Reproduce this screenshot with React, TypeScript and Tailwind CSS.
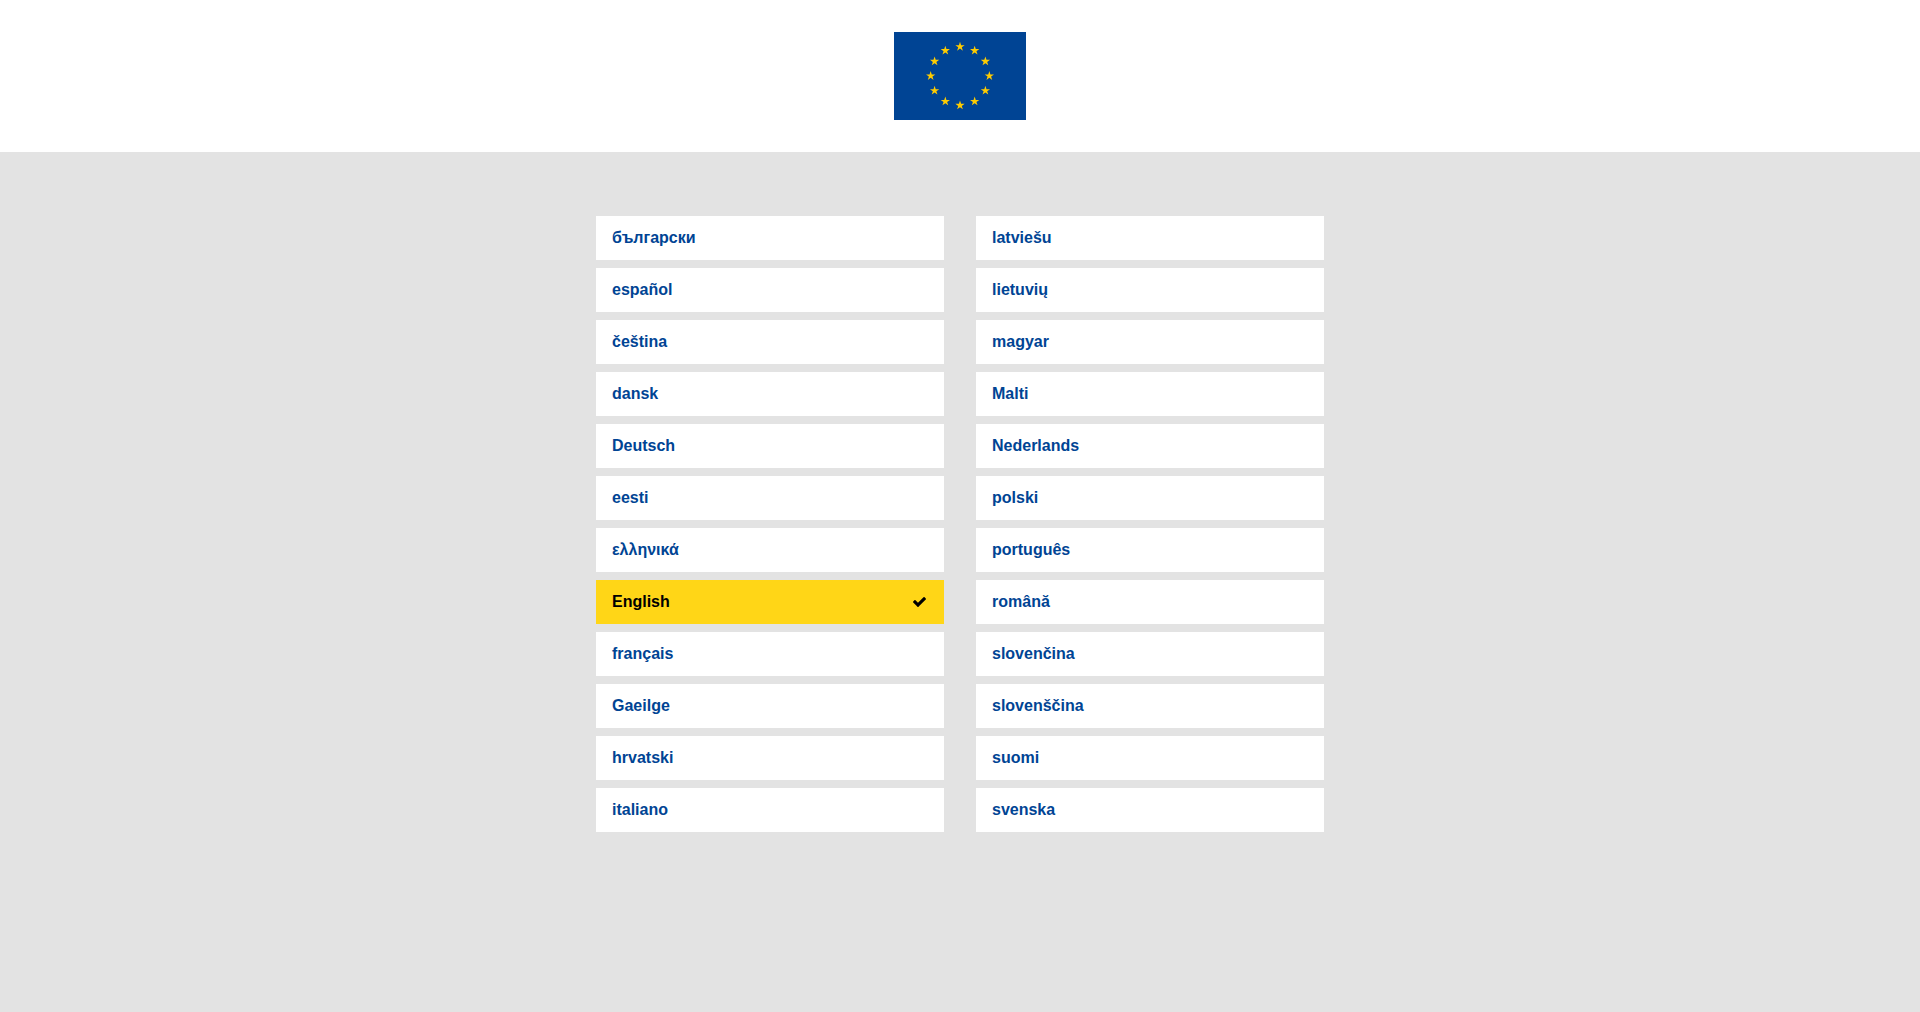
import React from 'react';

type Language = { code: string; name: string };

const columns: Language[][] = [
  [
    { code: 'bg', name: 'български' },
    { code: 'es', name: 'español' },
    { code: 'cs', name: 'čeština' },
    { code: 'da', name: 'dansk' },
    { code: 'de', name: 'Deutsch' },
    { code: 'et', name: 'eesti' },
    { code: 'el', name: 'ελληνικά' },
    { code: 'en', name: 'English' },
    { code: 'fr', name: 'français' },
    { code: 'ga', name: 'Gaeilge' },
    { code: 'hr', name: 'hrvatski' },
    { code: 'it', name: 'italiano' },
  ],
  [
    { code: 'lv', name: 'latviešu' },
    { code: 'lt', name: 'lietuvių' },
    { code: 'hu', name: 'magyar' },
    { code: 'mt', name: 'Malti' },
    { code: 'nl', name: 'Nederlands' },
    { code: 'pl', name: 'polski' },
    { code: 'pt', name: 'português' },
    { code: 'ro', name: 'română' },
    { code: 'sk', name: 'slovenčina' },
    { code: 'sl', name: 'slovenščina' },
    { code: 'fi', name: 'suomi' },
    { code: 'sv', name: 'svenska' },
  ],
];

const selected = 'en';

// Five-pointed star, one point up, as a list of polygon points.
function starPoints(cx: number, cy: number, outer: number): string {
  const inner = outer * 0.382;
  return Array.from({ length: 10 }, (_, i) => {
    const r = i % 2 === 0 ? outer : inner;
    const a = (i * Math.PI) / 5 - Math.PI / 2;
    return `${(cx + r * Math.cos(a)).toFixed(2)},${(cy + r * Math.sin(a)).toFixed(2)}`;
  }).join(' ');
}

function Flag() {
  return (
    <svg viewBox="0 0 132 88" className="h-[88px] w-[132px]" role="img" aria-label="European Union flag">
      <rect width="132" height="88" fill="#004494" />
      {Array.from({ length: 12 }, (_, i) => {
        const a = (i * Math.PI) / 6;
        return (
          <polygon
            key={i}
            fill="#ffcc00"
            points={starPoints(66 + 29.33 * Math.sin(a), 44 - 29.33 * Math.cos(a), 4.89)}
          />
        );
      })}
    </svg>
  );
}

function Check() {
  return (
    <svg viewBox="121 334 1550 1188" className="mr-0.5 h-2.5 w-[13px]" fill="currentColor" aria-hidden="true">
      <path d="M1671 566q0 40-28 68l-724 724-136 136q-28 28-68 28t-68-28l-136-136-362-362q-28-28-28-68t28-68l136-136q28-28 68-28t68 28l294 295 656-657q28-28 68-28t68 28l136 136q28 28 28 68z" />
    </svg>
  );
}

function LanguageLink({ language }: { language: Language }) {
  const active = language.code === selected;
  return (
    <li>
      <a
        href={`#${language.code}`}
        lang={language.code}
        aria-current={active ? 'true' : undefined}
        className={
          active
            ? 'flex items-center justify-between bg-[#ffd617] px-4 py-2.5 text-black'
            : 'flex items-center justify-between bg-white px-4 py-2.5 text-[#004494] hover:underline'
        }
      >
        {language.name}
        {active && <Check />}
      </a>
    </li>
  );
}

export default function App() {
  return (
    <div className="flex min-h-screen flex-col bg-[#e3e3e3] font-['Liberation_Sans',Arial,sans-serif] text-base font-bold">
      <header className="flex justify-center bg-white py-8">
        <Flag />
      </header>
      <main className="mx-auto grid w-full max-w-[760px] grid-cols-1 gap-x-8 gap-y-2 px-4 py-16 sm:grid-cols-2">
        {columns.map((column, i) => (
          <ul key={i} className="flex flex-col gap-2">
            {column.map((language) => (
              <LanguageLink key={language.code} language={language} />
            ))}
          </ul>
        ))}
      </main>
    </div>
  );
}
